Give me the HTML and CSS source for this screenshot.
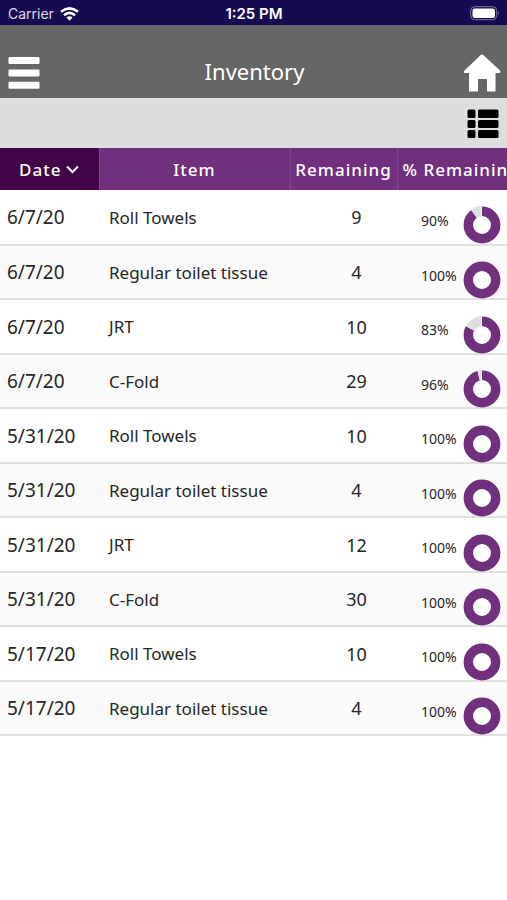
FILE: index.html
```html
<!DOCTYPE html>
<html lang="en">
<head>
<meta charset="utf-8">
<meta name="viewport" content="width=device-width, initial-scale=1">
<title>Inventory</title>
<link rel="stylesheet" href="styles.css">
</head>
<body>
<div class="status">
  <div class="carrier">
    <span>Carrier</span>
    <svg width="19" height="14" viewBox="0 0 19 14" fill="none" stroke="#fff" stroke-width="2.6" aria-hidden="true">
      <path d="M1 4.8Q9.500-2 18 4.800"/>
      <path d="M4 8.200Q9.500 3.600 15 8.200"/>
      <path d="M9.500 13.700L6.400 10.500Q9.500 8 12.600 10.500Z" fill="#fff" stroke="none"/>
    </svg>
  </div>
  <span class="time">1:25 PM</span>
  <svg class="battery" width="30" height="15" viewBox="0 0 30 15" aria-hidden="true">
    <rect x=".7" y=".7" width="26" height="13" rx="4" fill="none" stroke="#7e78a8"/>
    <rect x="2.500" y="2.500" width="22.500" height="9.500" rx="2.500" fill="#fff"/>
    <path d="M28 5Q29.800 7.200 28 9.400Z" fill="#7e78a8"/>
  </svg>
</div>
<header class="header">
  <button class="icon-button" type="button" aria-label="Menu">
    <svg width="32" height="32" viewBox="0 0 32 32" fill="#fff" aria-hidden="true">
      <rect x=".5" width="31" height="7" rx="1"/><rect x=".5" y="12.400" width="31" height="7" rx="1"/><rect x=".5" y="24.800" width="31" height="7" rx="1"/>
    </svg>
  </button>
  <h1>Inventory</h1>
  <a class="icon-button" href="#" aria-label="Home">
    <svg width="38" height="38" viewBox="0 0 38 38" fill="#fff" aria-hidden="true">
      <path d="M18 .8Q19 0 20 .8L37 16.500Q38 19 36 19H32.500V37.500H24V25H15V37.500H6V19H2Q0 19 1 17Z"/>
    </svg>
  </a>
</header>
<div class="toolbar">
  <button class="icon-button" type="button" aria-label="List view">
    <svg width="32" height="30" viewBox="0 0 32 30" aria-hidden="true">
      <rect x=".5" y=".5" width="8" height="8.500" rx="1.500"/><rect x="11" y=".5" width="20.500" height="8.500" rx="1.500"/>
      <rect x=".5" y="11" width="8" height="8" rx="1.500"/><rect x="11" y="11" width="20.500" height="8" rx="1.500"/>
      <rect x=".5" y="21" width="8" height="8" rx="1.500"/><rect x="11" y="21" width="20.500" height="8" rx="1.500"/>
    </svg>
  </button>
</div>
<table class="inventory">
  <colgroup><col class="col-date"><col><col class="col-remaining"><col class="col-percent"></colgroup>
  <thead>
    <tr>
      <th class="sorted" aria-sort="descending"><button type="button" class="sort">Date
        <svg width="13" height="9" viewBox="0 0 13 9" fill="none" stroke="#fff" stroke-width="2" aria-hidden="true"><path d="M1 1.500L6.500 7L12 1.500"/></svg></button></th>
      <th>Item</th><th>Remaining</th><th class="clipped">% Remaining</th>
    </tr>
  </thead>
  <tbody id="rows"></tbody>
</table>
<script src="rows.js"></script>
</body>
</html>
```
FILE: styles.css
```css
* { box-sizing: border-box; }
body {
  margin: 0;
  background: #fff;
  color: #262626;
  font-family: "Noto Sans", sans-serif;
  overflow-x: hidden;
}
svg { display: block; }
.status {
  display: grid;
  grid-template-columns: 1fr auto 1fr;
  align-items: center;
  height: 25px;
  padding: 2px 7px 0 8px;
  background: #160b50;
  color: #fff;
  font: 14px Inter, sans-serif;
}
.carrier { display: flex; align-items: center; gap: 6px; color: #dcdaea; }
.time { font-size: 15px; font-weight: 600; }
.battery { justify-self: end; }
.header {
  display: grid;
  grid-template-columns: 38px 1fr 38px;
  align-items: center;
  height: 73px;
  padding: 23px 6px 0 8px;
  background: #666;
  color: #fff;
}
h1 { margin: 0; padding-bottom: 4px; font-size: 22px; font-weight: 400; line-height: 30px; text-align: center; }
.icon-button { padding: 0; border: 0; background: none; }
.toolbar {
  display: flex;
  align-items: center;
  justify-content: flex-end;
  height: 50px;
  padding: 2px 8px 0;
  background: #ddd;
}
.inventory { width: 100%; table-layout: fixed; border-collapse: collapse; }
.col-date { width: 99px; }
.col-remaining { width: 107px; }
.col-percent { width: 110px; }
th {
  height: 42px;
  padding: 0;
  border-left: 1px solid #81478c;
  background: #71307e;
  color: #fff;
  font-size: 17px;
  font-weight: 500;
  letter-spacing: 1px;
  white-space: nowrap;
}
th.sorted { border-left: 0; background: #400447; }
th.clipped { padding-left: 5px; overflow: hidden; text-align: left; }
.sort {
  display: flex;
  align-items: center;
  justify-content: center;
  gap: 5px;
  width: 100%;
  padding: 0;
  border: 0;
  background: none;
  color: inherit;
  font: inherit;
  letter-spacing: inherit;
}
td { height: 55px; padding: 0; border-bottom: 2px solid #e0e0e0; font-size: 17px; }
tbody tr:nth-child(even) td { height: 54px; background: #fafafa; }
td.date { padding-left: 7px; font-size: 19px; }
td.item { padding-left: 10px; }
td.remaining { padding-left: 26px; font-size: 18px; text-align: center; }
.meter {
  display: flex;
  align-items: center;
  justify-content: space-between;
  padding: 16px 6px 0 24px;
  height: 52px;
  font-size: 14px;
}
.meter span { padding-bottom: 10px; }
```
FILE: rows.js
```js
const rows = [
  ["6/7/20", "Roll Towels", 9, 90],
  ["6/7/20", "Regular toilet tissue", 4, 100],
  ["6/7/20", "JRT", 10, 83],
  ["6/7/20", "C-Fold", 29, 96],
  ["5/31/20", "Roll Towels", 10, 100],
  ["5/31/20", "Regular toilet tissue", 4, 100],
  ["5/31/20", "JRT", 12, 100],
  ["5/31/20", "C-Fold", 30, 100],
  ["5/17/20", "Roll Towels", 10, 100],
  ["5/17/20", "Regular toilet tissue", 4, 100]
];

// The gray remainder has a thin white edge where it meets the filled arc.
function donut(percent) {
  const gap = percent < 100
    ? `<circle cx="19" cy="19" r="13.700" fill="none" stroke="#fff" stroke-width="10" pathLength="100" stroke-dasharray="${100 - percent} 100" stroke-dashoffset="${-percent}" transform="rotate(-90 19 19)"/>
       <circle cx="19" cy="19" r="13.700" fill="none" stroke="#dedede" stroke-width="9.400" pathLength="100" stroke-dasharray="${99 - percent} 100" stroke-dashoffset="${-percent}" transform="rotate(-90 19 19)"/>`
    : "";
  return `<svg width="38" height="38" viewBox="0 0 38 38" aria-hidden="true">
    <circle cx="19" cy="19" r="13.700" fill="#fff" stroke="#71307e" stroke-width="9.400"/>${gap}</svg>`;
}

document.getElementById("rows").innerHTML = rows.map(([date, item, left, percent]) =>
  `<tr><td class="date">${date}</td><td class="item">${item}</td><td class="remaining">${left}</td>
   <td><div class="meter"><span>${percent}%</span>${donut(percent)}</div></td></tr>`).join("");
```
